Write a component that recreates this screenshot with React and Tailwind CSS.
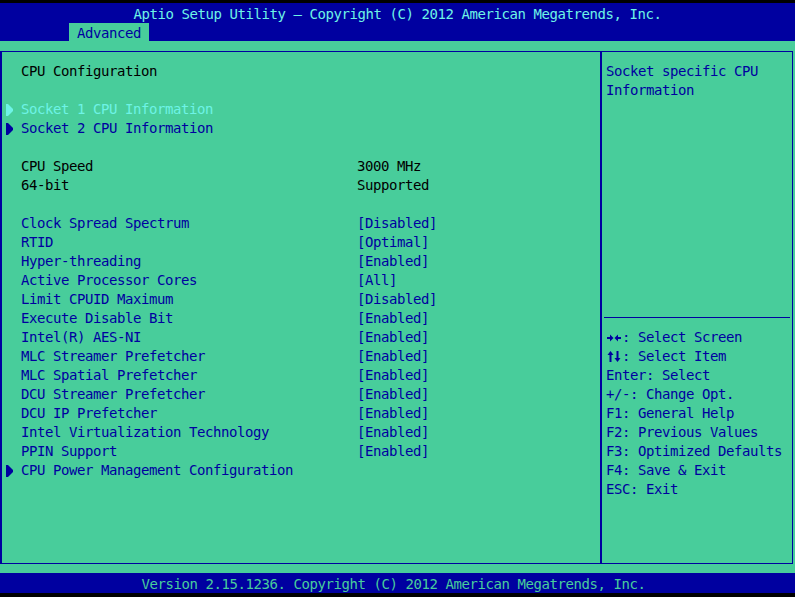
import React from 'react';

const font = { fontFamily: '"DejaVu Sans Mono", "Liberation Mono", monospace' };

const rows = [
    { type: 'title', label: 'CPU Configuration' },
    { type: 'blank' },
    { type: 'sub', label: 'Socket 1 CPU Information', selected: true },
    { type: 'sub', label: 'Socket 2 CPU Information' },
    { type: 'blank' },
    { type: 'info', label: 'CPU Speed', value: '3000 MHz' },
    { type: 'info', label: '64-bit', value: 'Supported' },
    { type: 'blank' },
    { type: 'opt', label: 'Clock Spread Spectrum', value: '[Disabled]' },
    { type: 'opt', label: 'RTID', value: '[Optimal]' },
    { type: 'opt', label: 'Hyper-threading', value: '[Enabled]' },
    { type: 'opt', label: 'Active Processor Cores', value: '[All]' },
    { type: 'opt', label: 'Limit CPUID Maximum', value: '[Disabled]' },
    { type: 'opt', label: 'Execute Disable Bit', value: '[Enabled]' },
    { type: 'opt', label: 'Intel(R) AES-NI', value: '[Enabled]' },
    { type: 'opt', label: 'MLC Streamer Prefetcher', value: '[Enabled]' },
    { type: 'opt', label: 'MLC Spatial Prefetcher', value: '[Enabled]' },
    { type: 'opt', label: 'DCU Streamer Prefetcher', value: '[Enabled]' },
    { type: 'opt', label: 'DCU IP Prefetcher', value: '[Enabled]' },
    { type: 'opt', label: 'Intel Virtualization Technology', value: '[Enabled]' },
    { type: 'opt', label: 'PPIN Support', value: '[Enabled]' },
    { type: 'sub', label: 'CPU Power Management Configuration' },
];

// key glyphs drawn for the two arrow rows
function HorizArrows() {
    return (
        <svg width="16" height="19" viewBox="0 0 16 19" className="inline-block align-top">
            <rect x="1" y="9" width="4" height="2" fill="#0000a0" />
            <polygon points="4,6.5 7.5,10 4,13.5" fill="#0000a0" />
            <polygon points="12,6.5 8.5,10 12,13.5" fill="#0000a0" />
            <rect x="11" y="9" width="4" height="2" fill="#0000a0" />
        </svg>
    );
}

function VertArrows() {
    return (
        <svg width="16" height="19" viewBox="0 0 16 19" className="inline-block align-top">
            <polygon points="4.5,4 1.5,8 7.5,8" fill="#0000a0" />
            <rect x="3.5" y="7" width="2" height="8" fill="#0000a0" />
            <rect x="10.5" y="4" width="2" height="8" fill="#0000a0" />
            <polygon points="11.5,15 8.5,11 14.5,11" fill="#0000a0" />
        </svg>
    );
}

const help = [
    [<HorizArrows />, ': Select Screen'],
    [<VertArrows />, ': Select Item'],
    ['Enter', ': Select'],
    ['+/-', ': Change Opt.'],
    ['F1', ': General Help'],
    ['F2', ': Previous Values'],
    ['F3', ': Optimized Defaults'],
    ['F4', ': Save & Exit'],
    ['ESC', ': Exit'],
];

function Arrow({ color }) {
    return (
        <svg width="8" height="12" viewBox="0 0 8 12" className="ml-[4px]">
            <polygon points="0,0 2,0 7,5 7,7 2,12 0,12" fill={color} />
        </svg>
    );
}

function Row({ row }) {
    if (row.type === 'blank') return <div className="h-[19px]" />;
    const selected = row.selected;
    const color =
        row.type === 'title' || row.type === 'info'
            ? 'text-[#000000]'
            : selected
            ? 'text-[#6ef3e6]'
            : 'text-[#0000a0]';
    return (
        <div className={`flex h-[19px] items-center ${color}`}>
            <div className="w-[19px] flex items-center">
                {row.type === 'sub' && <Arrow color={selected ? '#6ef3e6' : '#0000a0'} />}
            </div>
            <div className="w-[336px] whitespace-pre">{row.label}</div>
            {row.value && <div className="whitespace-pre">{row.value}</div>}
        </div>
    );
}

export default function App() {
    return (
        <div
            className="w-[795px] h-[597px] bg-black pt-[3px] flex flex-col text-[14px] leading-[19px] tracking-[-0.43px] overflow-hidden"
            style={font}
        >
            {/* header */}
            <div className="h-[38px] bg-[#0000a0] flex flex-col">
                <div className="h-[20px] pt-[2px] text-center text-[#6ef3e6]">
                    Aptio Setup Utility – Copyright (C) 2012 American Megatrends, Inc.
                </div>
                <div className="h-[18px] flex">
                    <div className="ml-[69px] w-[80px] bg-[#48cd9b] text-[#0000a0] pl-[8px] pt-[1px] leading-[18px]">
                        Advanced
                    </div>
                </div>
            </div>

            {/* body */}
            <div className="h-[532px] bg-[#48cd9b] pt-[10px]">
                <div className="w-[793px] h-[513px] border-l-2 border-t border-r border-b border-[#0000a0] flex">
                    <div className="w-[600px] border-r-2 border-[#0000a0] pt-[10px]">
                        {rows.map((row, i) => (
                            <Row key={i} row={row} />
                        ))}
                    </div>
                    <div className="flex-1 flex flex-col text-[#0000a0]">
                        <div className="h-[265px] pt-[10px] pl-[4px]">
                            <div>Socket specific CPU</div>
                            <div>Information</div>
                        </div>
                        <div className="mx-[2px] border-t border-[#0000a0]" />
                        <div className="pt-[10px] pl-[4px]">
                            {help.map(([key, text], i) => (
                                <div key={i} className="h-[19px] whitespace-pre">
                                    {key}
                                    {text}
                                </div>
                            ))}
                        </div>
                    </div>
                </div>
            </div>

            {/* footer */}
            <div className="h-[20px] bg-[#0000a0] text-center text-[#48cd9b] pt-[2px] pr-[8px]">
                Version 2.15.1236. Copyright (C) 2012 American Megatrends, Inc.
            </div>
        </div>
    );
}
